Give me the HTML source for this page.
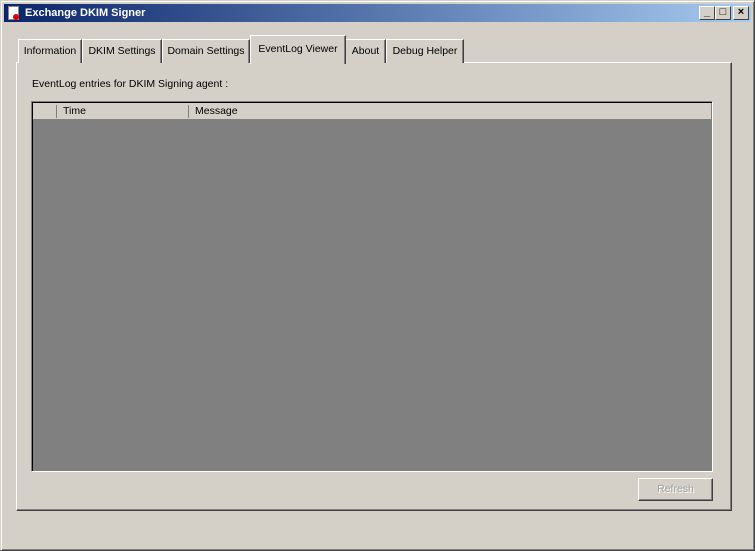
<!DOCTYPE html>
<html><head><style>
body{margin:0;width:755px;height:551px;background:#d4d0c8;font-family:"Liberation Sans",sans-serif;font-size:10.5px;position:relative;overflow:hidden}
.a{position:absolute;box-sizing:border-box}
.title{left:4px;top:4px;width:747px;height:18px;background:linear-gradient(90deg,#0a246a,#a6caf0);color:#fff;font-weight:bold;font-size:11px;line-height:18px;padding-left:21px}
.btn{top:6px;width:16px;height:14px;background:#d4d0c8;border:1px solid;border-color:#fff #404040 #404040 #fff;font-size:11px;text-align:center;line-height:11px;color:#000;font-weight:bold}
.tab{top:39px;height:24px;border:1px solid;border-color:#fff #404040 transparent #fff;border-bottom:none;box-shadow:inset -1px 0 #808080;line-height:22px;text-align:center;background:#d4d0c8}
.panel{left:16px;top:62px;width:716px;height:449px;border:1px solid;border-color:#fff #404040 #404040 #fff;box-shadow:inset -1px -1px #808080}
</style></head><body>
<div class="a" style="left:0;top:0;width:755px;height:551px;border:1px solid;border-color:#d4d0c8 #404040 #404040 #d4d0c8;box-shadow:inset 1px 1px #fff,inset -1px -1px #808080"></div>
<div class="a title">Exchange DKIM Signer</div>
<div class="a" style="left:8px;top:6px;width:11px;height:14px;background:#fff;border:1px solid #888"></div>
<div class="a" style="left:13px;top:14px;width:6px;height:6px;background:#d00;border-radius:50%"></div>
<div class="a btn" style="left:699px">_</div>
<div class="a btn" style="left:715px">□</div>
<div class="a btn" style="left:733px">×</div>
<div class="a panel"></div>
<div class="a tab" style="left:18px;width:64px">Information</div>
<div class="a tab" style="left:82px;width:80px">DKIM Settings</div>
<div class="a tab" style="left:162px;width:88px">Domain Settings</div>
<div class="a tab" style="left:345px;width:41px">About</div>
<div class="a tab" style="left:386px;width:78px">Debug Helper</div>
<div class="a tab" style="left:250px;top:35px;width:96px;height:29px;line-height:26px">EventLog Viewer</div>
<div class="a" style="left:32px;top:78px">EventLog entries for DKIM Signing agent :</div>
<div class="a" style="left:31px;top:101px;width:682px;height:371px;background:#808080;border:1px solid;border-color:#808080 #fff #fff #808080;box-shadow:inset 1px 1px #000"></div>
<div class="a" style="left:33px;top:103px;width:678px;height:16px;background:#d4d0c8;line-height:17px">
<span class="a" style="left:23px;top:2px;height:13px;border-left:1px solid #808080"></span>
<span class="a" style="left:30px">Time</span>
<span class="a" style="left:155px;top:2px;height:13px;border-left:1px solid #808080"></span>
<span class="a" style="left:162px">Message</span></div>
<div class="a" style="left:638px;top:478px;width:75px;height:23px;border:1px solid;border-color:#fff #404040 #404040 #fff;box-shadow:inset -1px -1px #808080;text-align:center;line-height:21px;color:#a0a0a0;text-shadow:1px 1px #fff">Refresh</div>
</body></html>
